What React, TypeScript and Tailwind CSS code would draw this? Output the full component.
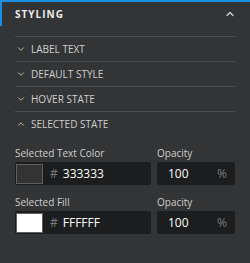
import { ChevronDown, ChevronUp } from 'lucide-react';

const sections = [
  { name: 'LABEL TEXT', open: false },
  { name: 'DEFAULT STYLE', open: false },
  { name: 'HOVER STATE', open: false },
  { name: 'SELECTED STATE', open: true },
];

function ColorField({ label, hex, swatch }: { label: string; hex: string; swatch: string }) {
  return (
    <div className="flex gap-[6px]">
      <div className="w-[136px]">
        <div className="h-[16px] leading-[16px] text-[10px] text-[#cfcfcf]">{label}</div>
        <div className="mt-[1px] h-[23px] rounded-[2px] bg-[#1c1d1e] flex items-center pl-[1px]">
          <div className={`w-[27px] h-[20px] border border-[#5f6062] ${swatch}`} />
          <span className="ml-[7px] text-[12px] text-[#7a7b7c]">#</span>
          <span className="ml-[5px] text-[12px] text-white">{hex}</span>
        </div>
      </div>
      <div className="w-[78px]">
        <div className="h-[16px] leading-[16px] text-[10px] text-[#cfcfcf]">Opacity</div>
        <div className="mt-[1px] h-[23px] rounded-[2px] bg-[#1c1d1e] flex items-center justify-between pl-[11px] pr-[8px]">
          <span className="text-[12px] text-white">100</span>
          <span className="text-[12px] text-[#7a7b7c]">%</span>
        </div>
      </div>
    </div>
  );
}

export default function App() {
  return (
    <div className="w-[250px] h-[263px] bg-[#333436] font-['Open_Sans',sans-serif] overflow-hidden">
      {/* Header */}
      <div className="h-[26px] border-t-2 border-l-2 border-[#1a8fe3] flex items-center justify-between pl-[13px] pr-[14px]">
        <span className="text-[10px] font-bold tracking-[1px] text-[#ececec]">STYLING</span>
        <ChevronUp className="w-[12px] h-[12px] text-[#d8d8d8]" strokeWidth={2.5} />
      </div>

      <div className="px-[15px] pt-[10px]">
        {sections.map((s) => (
          <div
            key={s.name}
            className="h-[25px] border-t border-[#4b4c4e] flex items-center gap-[5px] pl-[1px]"
          >
            {s.open ? (
              <ChevronUp className="w-[10px] h-[10px] text-[#cfcfcf]" strokeWidth={2} />
            ) : (
              <ChevronDown className="w-[10px] h-[10px] text-[#cfcfcf]" strokeWidth={2} />
            )}
            <span className="text-[10px] text-[#cfcfcf]">{s.name}</span>
          </div>
        ))}

        <div className="mt-[9px] flex flex-col gap-[9px]">
          <ColorField label="Selected Text Color" hex="333333" swatch="bg-[#333333]" />
          <ColorField label="Selected Fill" hex="FFFFFF" swatch="bg-white" />
        </div>
      </div>
    </div>
  );
}
